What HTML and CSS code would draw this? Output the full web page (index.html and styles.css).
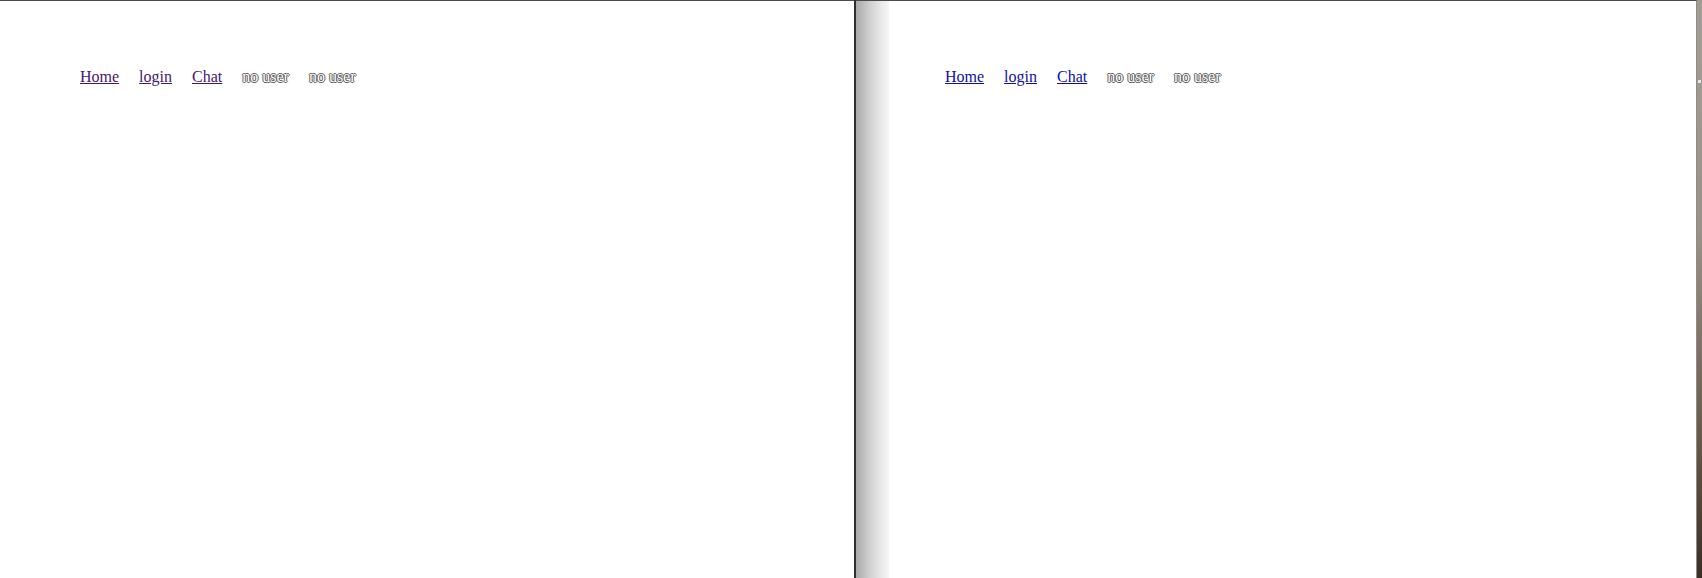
FILE: index.html
```html
<!DOCTYPE html>
<html>
<head>
<meta charset="utf-8">
<link rel="stylesheet" href="styles.css">
</head>
<body>
<div class="screen">
  <div class="pane pane-left">
    <nav class="nav nav-left">
      <a class="link visited" href="#">Home</a>
      <a class="link visited" href="#">login</a>
      <a class="link visited" href="#">Chat</a>
      <span class="status">no user</span>
      <span class="status">no user</span>
    </nav>
  </div>
  <div class="divider"></div>
  <div class="pane pane-right">
    <div class="shadow"></div>
    <nav class="nav nav-right">
      <a class="link fresh" href="#">Home</a>
      <a class="link fresh" href="#">login</a>
      <a class="link fresh" href="#">Chat</a>
      <span class="status">no user</span>
      <span class="status">no user</span>
    </nav>
  </div>
  <div class="desk"><div class="desk-mark"></div></div>
</div>
</body>
</html>
```
FILE: styles.css
```css
html, body {
  margin: 0;
  padding: 0;
  background: #ffffff;
}
body {
  width: 1702px;
  height: 578px;
  overflow: hidden;
  font-family: "Liberation Serif", "Times New Roman", serif;
  font-size: 16px;
}
.screen {
  display: flex;
  height: 578px;
}
.pane {
  background: #ffffff;
  border-top: 1px solid #4a4a4a;
  box-sizing: border-box;
  height: 578px;
}
.pane-left {
  width: 854px;
}
.divider {
  width: 2px;
  background: #2e2e2e;
}
.pane-right {
  flex: 1;
  position: relative;
  border-right: 1px solid #8c8c8c;
}
.shadow {
  position: absolute;
  left: 0;
  top: 0;
  bottom: 0;
  width: 33px;
  background: linear-gradient(to right, #a9a9a9 0%, #cfcfcf 40%, #ebebeb 80%, #f5f5f5 100%);
}
.nav {
  display: flex;
  gap: 20px;
  padding-top: 67px;
  line-height: normal;
}
.nav-left {
  padding-left: 80px;
}
.nav-right {
  position: relative;
  padding-left: 89px;
}
.link {
  text-decoration: underline;
}
.visited {
  color: #44186c;
}
.fresh {
  color: #10109e;
}
.status {
  color: #ffffff;
  text-shadow: -1px 0 0 #5a5a5a, 1px 0 0 #5a5a5a, 0 -1px 0 #5a5a5a, 0 1px 0 #5a5a5a;
}
.desk {
  width: 5px;
  position: relative;
  background: linear-gradient(to bottom, #a29d94 0%, #9a9288 40%, #6b5a48 75%, #3e2e20 100%);
}
.desk-mark {
  position: absolute;
  left: 1px;
  top: 80px;
  width: 3px;
  height: 3px;
  background: #e8e8e8;
}
```
